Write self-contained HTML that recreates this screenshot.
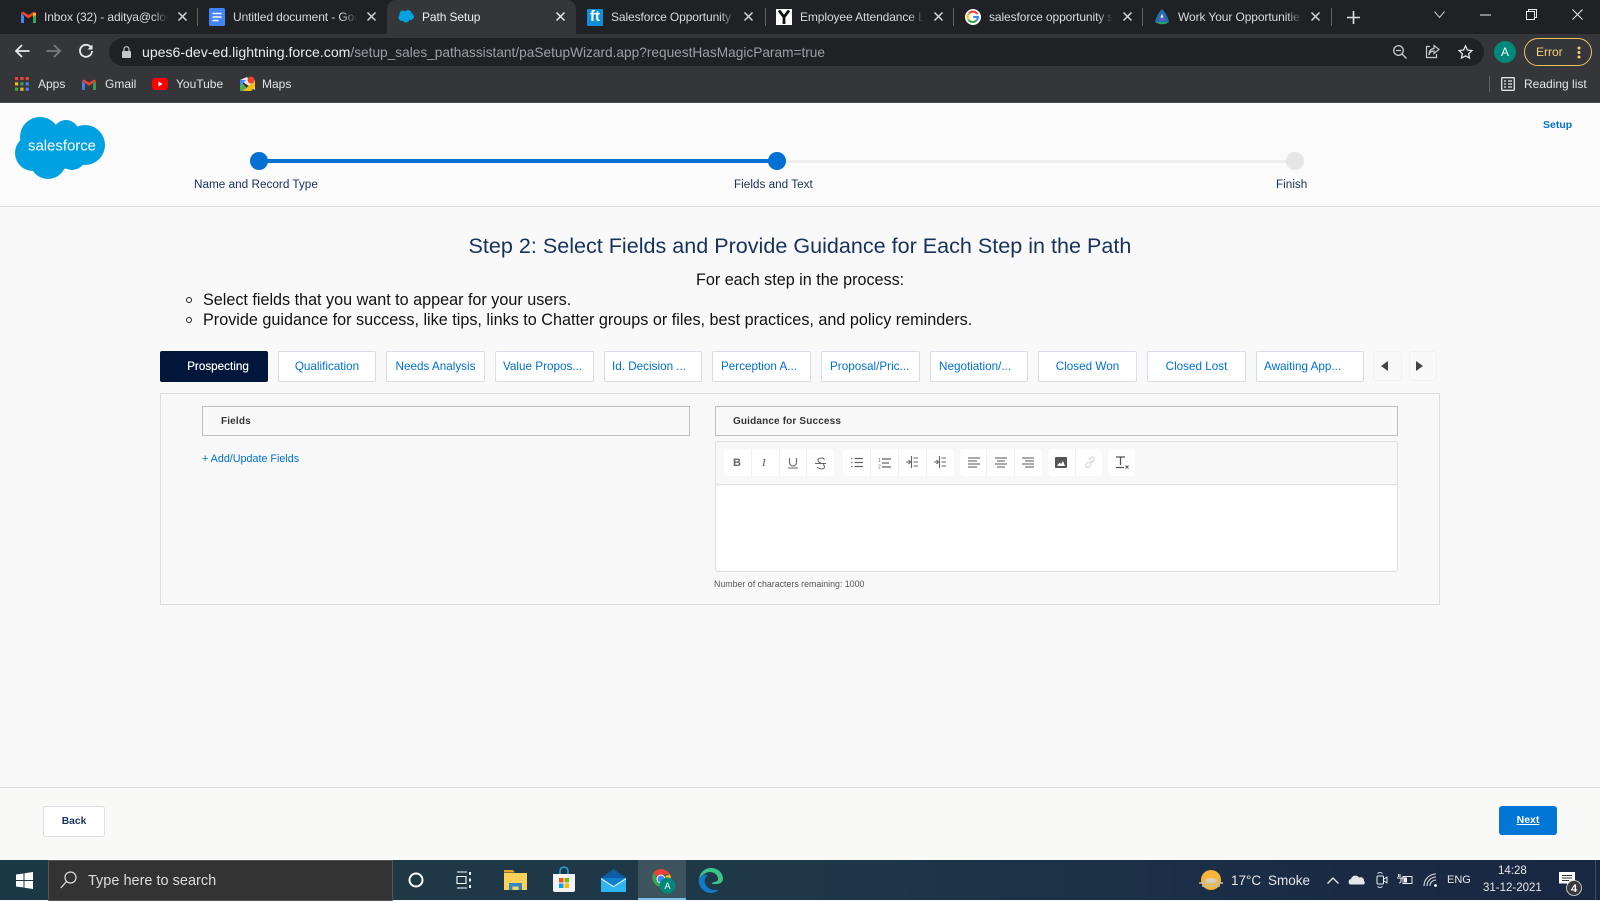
<!DOCTYPE html>
<html><head><meta charset="utf-8"><title>Path Setup</title>
<style>
html,body{margin:0;padding:0;width:1600px;height:900px;overflow:hidden;background:#f9f9f9;font-family:"Liberation Sans",Arial,sans-serif}
.a,.t{position:absolute}
.t{white-space:nowrap}
svg{position:absolute;overflow:visible}
.tab{color:#d6d8db;font-size:12px;letter-spacing:-.1px;line-height:16px;top:9px;overflow:hidden;-webkit-mask-image:linear-gradient(90deg,#000 88%,transparent)}
.sep{position:absolute;top:8px;width:1px;height:18px;background:#5f6368}
.bm{color:#e3e5e8;font-size:12px;line-height:16px;top:76px}
.st{position:absolute;top:351px;height:29px;box-sizing:content-box;background:#fff;border:1px solid #d8dde6;border-radius:2px;color:#0070d2;font-size:11.7px;line-height:29px;text-align:center;white-space:nowrap}
.st.l{text-align:left;padding-left:8px}
.lbl{color:#16325c;font-size:11.75px;line-height:16px;top:177px}
.box{position:absolute;top:406px;height:28px;border:1px solid #bfbfbf;background:#f9f9f9;color:#333;font-size:10px;font-weight:bold;line-height:29px;letter-spacing:.15px}
.grp{position:absolute;top:449px;height:27px;background:#fff;border-radius:4px}
.ts{position:absolute;top:0;width:1px;height:27px;background:#f1f1f1}
.tb{color:#e6e7e8}
</style></head><body>

<!-- browser chrome -->
<div class="a" style="left:0;top:0;width:1600px;height:34px;background:#202124"></div>
<div class="a" style="left:0;top:34px;width:1600px;height:68px;background:#35363a"></div>
<div class="a" style="left:0;top:102px;width:1600px;height:1px;background:#4a4b4e"></div>
<div class="a" style="left:387px;top:0;width:189px;height:34px;background:#35363a;border-radius:9px 9px 0 0"></div>

<!-- tab 1 -->
<svg style="left:21px;top:11px" width="15" height="12" viewBox="0 0 15 12"><path d="M0 2v10h3V5z" fill="#4285f4"/><path d="M12 5v7h3V2z" fill="#34a853"/><path d="M0 2l7.500 5.500L15 2 13 .5 7.500 4 2 .5z" fill="#ea4335"/><path d="M12 2l3 0v2l-3 2z" fill="#fbbc05"/></svg>
<div class="t tab" style="left:44px;width:124px">Inbox (32) - aditya@cloudwerx</div>
<svg style="left:178px;top:12px" width="9" height="9"><path d="M.5.5l8 8M8.500.5l-8 8" stroke="#d6d8db" stroke-width="1.500"/></svg>
<div class="sep" style="left:197px"></div>
<!-- tab 2 -->
<svg style="left:209px;top:8px" width="16" height="18"><rect width="16" height="18" rx="1.500" fill="#4285f4"/><path d="M3.500 5.500h9M3.500 9h9M3.500 12.500h6" stroke="#fff" stroke-width="1.500"/></svg>
<div class="t tab" style="left:233px;width:124px">Untitled document - Google Docs</div>
<svg style="left:367px;top:12px" width="9" height="9"><path d="M.5.5l8 8M8.500.5l-8 8" stroke="#d6d8db" stroke-width="1.500"/></svg>
<!-- tab 3 -->
<svg style="left:398px;top:10px" width="16" height="13" viewBox="0 0 16 13"><g fill="#00a1e0"><circle cx="5" cy="4" r="3.500"/><circle cx="10" cy="3.500" r="3.500"/><circle cx="12.500" cy="6.500" r="3.500"/><circle cx="4" cy="7.500" r="3.500"/><circle cx="8" cy="9" r="3.500"/></g></svg>
<div class="t tab" style="left:422px;color:#eceef0;width:124px">Path Setup</div>
<svg style="left:556px;top:12px" width="9" height="9"><path d="M.5.5l8 8M8.500.5l-8 8" stroke="#eceef0" stroke-width="1.500"/></svg>
<!-- tab 4 -->
<div class="a" style="left:587px;top:9px;width:16px;height:17px;background:#0f8fd6;border-radius:1px;color:#fff;font:bold 15px/16px 'Liberation Sans',sans-serif;text-align:center">ft</div>
<div class="t tab" style="left:611px;width:124px">Salesforce Opportunity Product</div>
<svg style="left:744px;top:12px" width="9" height="9"><path d="M.5.5l8 8M8.500.5l-8 8" stroke="#d6d8db" stroke-width="1.500"/></svg>
<div class="sep" style="left:765px"></div>
<!-- tab 5 -->
<div class="a" style="left:776px;top:9px;width:16px;height:16px;background:#fff"></div>
<svg style="left:776px;top:9px" width="16" height="16"><path d="M3 1.500L8 8l5-6.500M8 8v7" stroke="#111" stroke-width="2.800" fill="none"/></svg>
<div class="t tab" style="left:800px;width:124px">Employee Attendance List</div>
<svg style="left:934px;top:12px" width="9" height="9"><path d="M.5.5l8 8M8.500.5l-8 8" stroke="#d6d8db" stroke-width="1.500"/></svg>
<div class="sep" style="left:953px"></div>
<!-- tab 6 -->
<svg style="left:965px;top:9px" width="16" height="16" viewBox="0 0 16 16"><circle cx="8" cy="8" r="8" fill="#fff"/><path d="M12.300 5.200A5 5 0 0 0 4 4.500" stroke="#ea4335" stroke-width="2" fill="none"/><path d="M4 4.500a5 5 0 0 0-.3 6.500" stroke="#fbbc05" stroke-width="2" fill="none"/><path d="M3.700 11a5 5 0 0 0 7.600.5" stroke="#34a853" stroke-width="2" fill="none"/><path d="M11.300 11.500A5 5 0 0 0 13 8H8.200" stroke="#4285f4" stroke-width="2" fill="none"/></svg>
<div class="t tab" style="left:989px;width:124px">salesforce opportunity stages</div>
<svg style="left:1123px;top:12px" width="9" height="9"><path d="M.5.5l8 8M8.500.5l-8 8" stroke="#d6d8db" stroke-width="1.500"/></svg>
<div class="sep" style="left:1142px"></div>
<!-- tab 7 -->
<svg style="left:1154px;top:9px" width="16" height="16" viewBox="0 0 16 16"><path d="M8 0C5 3 2 8 1 13c2 2 12 2 14 0C14 8 11 3 8 0z" fill="#1f6fb5"/><path d="M8 3.500l-3.500 8.500h7z" fill="#6a5ab8"/><path d="M8 5l-1.500 3.500h3z" fill="#fff"/><path d="M1.500 13c3 3 10 3 13 0z" fill="#2e9e6b"/></svg>
<div class="t tab" style="left:1178px;width:124px">Work Your Opportunities</div>
<svg style="left:1311px;top:12px" width="9" height="9"><path d="M.5.5l8 8M8.500.5l-8 8" stroke="#d6d8db" stroke-width="1.500"/></svg>
<div class="sep" style="left:1331px"></div>
<svg style="left:1347px;top:11px" width="13" height="13"><path d="M6.500 0v13M0 6.500h13" stroke="#dfe1e5" stroke-width="1.600"/></svg>

<!-- window controls -->
<svg style="left:1434px;top:11px" width="11" height="7"><path d="M.5.500l5 6 5-6" stroke="#c8cacc" fill="none"/></svg>
<svg style="left:1480px;top:14px" width="11" height="2"><path d="M0 1h11" stroke="#e8eaed"/></svg>
<svg style="left:1526px;top:9px" width="11" height="11"><path d="M.5 2.500h8v8h-8zM2.500 2.500v-2h8v8h-2" stroke="#e8eaed" fill="none"/></svg>
<svg style="left:1572px;top:9px" width="11" height="11"><path d="M.5.5l10 10M10.500.5l-10 10" stroke="#e8eaed"/></svg>

<!-- toolbar -->
<svg style="left:15px;top:44px" width="15" height="14"><path d="M14.500 7H1.500M7 1L1 7l6 6" stroke="#e8eaed" stroke-width="1.800" fill="none"/></svg>
<svg style="left:46px;top:44px" width="15" height="14"><path d="M.5 7h13M8 1l6 6-6 6" stroke="#797b7e" stroke-width="1.800" fill="none"/></svg>
<svg style="left:79px;top:44px" width="14" height="14" viewBox="0 0 14 14"><path d="M12 3.500A6 6 0 1 0 13 7" stroke="#e8eaed" stroke-width="1.800" fill="none"/><path d="M13.500 .5v5h-5z" fill="#e8eaed"/></svg>
<div class="a" style="left:109px;top:38px;width:1375px;height:28px;background:#202124;border-radius:14px"></div>
<svg style="left:122px;top:46px" width="9" height="12"><path d="M2 5V3.200a2.500 2.500 0 0 1 5 0V5" stroke="#c5c7ca" fill="none" stroke-width="1.200"/><rect y="5" width="9" height="7" rx="1" fill="#c5c7ca"/></svg>
<div class="t" style="left:142px;top:44px;line-height:16px;color:#e8eaed"><span style="font-size:14.1px">upes6-dev-ed.lightning.force.com</span><span style="color:#9aa0a6;font-size:13.68px">/setup_sales_pathassistant/paSetupWizard.app?requestHasMagicParam=true</span></div>
<svg style="left:1393px;top:45px" width="14" height="14"><circle cx="5.500" cy="5.500" r="4.800" stroke="#c8cacc" stroke-width="1.300" fill="none"/><path d="M9 9l4.500 4.500M3 5.500h5" stroke="#c8cacc" stroke-width="1.300"/></svg>
<svg style="left:1425px;top:44px" width="15" height="15"><path d="M9 1.500l5 4-5 4V7C6 7 4.500 8.500 4 11c0-3.500 1.500-6 5-6.500zM5 2.500H1.500v11h10V10" stroke="#c8cacc" stroke-width="1.200" fill="none"/></svg>
<svg style="left:1458px;top:45px" width="15" height="14" viewBox="0 0 16 15"><path d="M8 1l2.100 4.400 4.800.6-3.500 3.300.9 4.700L8 11.700 3.700 14l.9-4.700L1.100 6l4.800-.6z" stroke="#dfe1e5" stroke-width="1.400" fill="none"/></svg>
<div class="a" style="left:1494px;top:41px;width:22px;height:22px;border-radius:50%;background:#00897b;color:#fff;font-size:12px;line-height:22px;text-align:center">A</div>
<div class="a" style="left:1524px;top:38px;width:66px;height:26px;border:1px solid #f0c060;border-radius:14px"></div>
<div class="t" style="left:1536px;top:44px;color:#f3d07a;font-size:12px;line-height:16px">Error</div>
<svg style="left:1577px;top:46px" width="4" height="13"><g fill="#f3d07a"><circle cx="2" cy="2" r="1.500"/><circle cx="2" cy="6.500" r="1.500"/><circle cx="2" cy="11" r="1.500"/></g></svg>

<!-- bookmarks -->
<svg style="left:15px;top:77px" width="14" height="14"><g><rect width="3.200" height="3.200" fill="#ea4335"/><rect x="5.300" width="3.200" height="3.200" fill="#ea4335"/><rect x="10.600" width="3.200" height="3.200" fill="#ea4335"/><rect y="5.300" width="3.200" height="3.200" fill="#fbbc05"/><rect x="5.300" y="5.300" width="3.200" height="3.200" fill="#34a853"/><rect x="10.600" y="5.300" width="3.200" height="3.200" fill="#4285f4"/><rect y="10.600" width="3.200" height="3.200" fill="#34a853"/><rect x="5.300" y="10.600" width="3.200" height="3.200" fill="#fbbc05"/><rect x="10.600" y="10.600" width="3.200" height="3.200" fill="#4285f4"/></g></svg>
<div class="t bm" style="left:38px">Apps</div>
<svg style="left:82px;top:79px" width="14" height="11" viewBox="0 0 15 12"><path d="M0 2v10h3V5z" fill="#4285f4"/><path d="M12 5v7h3V2z" fill="#34a853"/><path d="M0 2l7.500 5.500L15 2 13 .5 7.500 4 2 .5z" fill="#ea4335"/></svg>
<div class="t bm" style="left:105px">Gmail</div>
<svg style="left:152px;top:78px" width="16" height="12"><rect width="16" height="12" rx="3" fill="#f00"/><path d="M6.500 3.500v5l4-2.500z" fill="#fff"/></svg>
<div class="t bm" style="left:176px">YouTube</div>
<svg style="left:240px;top:76px" width="15" height="15"><path d="M0 4l9 11H1a1 1 0 0 1-1-1z" fill="#4caf50"/><path d="M0 4l7-3 8 10v3z" fill="#e8eaed"/><path d="M3 15L15 4v7l-4 4z" fill="#fbbc05"/><circle cx="11" cy="4" r="3.500" fill="#ea4335"/><path d="M0 4h6L0 10z" fill="#4285f4"/></svg>
<div class="t bm" style="left:262px">Maps</div>
<div class="a" style="left:1489px;top:76px;width:1px;height:16px;background:#5f6368"></div>
<svg style="left:1501px;top:77px" width="14" height="14"><rect x=".7" y=".7" width="12.600" height="12.600" rx="1" stroke="#e3e5e8" stroke-width="1.300" fill="none"/><path d="M3 4h2M7 4h4M3 7h2M7 7h4M3 10h2M7 10h4" stroke="#e3e5e8" stroke-width="1.200"/></svg>
<div class="t bm" style="left:1524px">Reading list</div>

<!-- page header -->
<div class="a" style="left:0;top:103px;width:1600px;height:757px;background:#f9f9f9"></div>
<div class="a" style="left:0;top:103px;width:1600px;height:103px;background:#fbfbfb"></div>
<div class="a" style="left:0;top:206px;width:1600px;height:1px;background:#dddddd"></div>
<svg style="left:0;top:103px" width="120" height="90"><g fill="#00a1e0"><circle cx="40" cy="34" r="20"/><circle cx="66" cy="30" r="13"/><circle cx="85" cy="42" r="20"/><circle cx="33" cy="50" r="18"/><circle cx="48" cy="58" r="18"/><circle cx="72" cy="53" r="14"/><circle cx="58" cy="45" r="22"/></g><text x="28" y="47.500" fill="#fff" font-family="Liberation Sans, sans-serif" font-size="15" textLength="68">salesforce</text></svg>
<div class="t" style="left:1543px;top:118px;color:#0070d2;font-size:10.5px;font-weight:bold;line-height:14px">Setup</div>

<!-- stepper -->
<div class="a" style="left:259px;top:159px;width:518px;height:4px;background:#0070d2"></div>
<div class="a" style="left:777px;top:160px;width:518px;height:3px;background:#eeeeee"></div>
<div class="a" style="left:250px;top:152px;width:18px;height:18px;border-radius:50%;background:#0070d2"></div>
<div class="a" style="left:768px;top:152px;width:18px;height:18px;border-radius:50%;background:#0070d2"></div>
<div class="a" style="left:1286px;top:152px;width:18px;height:18px;border-radius:50%;background:#e6e6e6"></div>
<div class="t lbl" style="left:194px">Name and Record Type</div>
<div class="t lbl" style="left:734px">Fields and Text</div>
<div class="t lbl" style="left:1276px">Finish</div>

<!-- heading -->
<div class="t" style="left:468.5px;top:233px;color:#16325c;font-size:21.57px;line-height:26px">Step 2: Select Fields and Provide Guidance for Each Step in the Path</div>
<div class="t" style="left:696px;top:271px;color:#111;font-size:16.15px;line-height:19px">For each step in the process:</div>
<div class="a" style="left:186px;top:297px;width:4px;height:4px;border:1px solid #222;border-radius:50%"></div>
<div class="a" style="left:186px;top:317px;width:4px;height:4px;border:1px solid #222;border-radius:50%"></div>
<div class="t" style="left:203px;top:291px;color:#111;font-size:16.17px;line-height:19px">Select fields that you want to appear for your users.</div>
<div class="t" style="left:203px;top:311px;color:#111;font-size:16.2px;line-height:19px">Provide guidance for success, like tips, links to Chatter groups or files, best practices, and policy reminders.</div>

<!-- stage tabs -->
<div class="st" style="left:160px;width:108px;height:31px;line-height:31px;border:0;background:#00163a;color:#fff;text-shadow:0 0 .4px #fff;box-sizing:border-box;padding-left:8px">Prospecting</div>
<div class="st" style="left:278px;width:96px">Qualification</div>
<div class="st" style="left:386px;width:97px">Needs Analysis</div>
<div class="st l" style="left:495px;width:90px;padding-left:7px">Value Propos...</div>
<div class="st l" style="left:604px;width:89px;padding-left:7px">Id. Decision ...</div>
<div class="st l" style="left:712px;width:89px">Perception A...</div>
<div class="st l" style="left:821px;width:89px">Proposal/Pric...</div>
<div class="st l" style="left:930px;width:88px">Negotiation/...</div>
<div class="st" style="left:1038px;width:97px">Closed Won</div>
<div class="st" style="left:1147px;width:97px">Closed Lost</div>
<div class="st l" style="left:1256px;width:99px;padding-left:7px">Awaiting App...</div>
<div class="a" style="left:1373px;top:351px;width:27px;height:28px;border:1px solid #f2f2f2;border-radius:3px"></div>
<div class="a" style="left:1409px;top:351px;width:26px;height:28px;border:1px solid #f2f2f2;border-radius:3px"></div>
<svg style="left:1381px;top:361px" width="7" height="10"><path d="M7 0v10L0 5z" fill="#444"/></svg>
<svg style="left:1416px;top:361px" width="7" height="10"><path d="M0 0v10l7-5z" fill="#444"/></svg>

<!-- panel -->
<div class="a" style="left:160px;top:393px;width:1278px;height:210px;border:1px solid #dcdcdc;background:#f8f8f8"></div>
<div class="box" style="left:202px;width:468px;padding-left:18px">Fields</div>
<div class="box" style="left:715px;width:664px;padding-left:17px">Guidance for Success</div>
<div class="t" style="left:202px;top:452px;color:#0070d2;font-size:10.75px;line-height:14px">+ Add/Update Fields</div>

<!-- editor -->
<div class="a" style="left:715px;top:441px;width:681px;height:129px;border:1px solid #e0e0e0;border-radius:3px;background:#f8f8f8"></div>
<div class="a" style="left:716px;top:484px;width:681px;height:1px;background:#e0e0e0"></div>
<div class="a" style="left:716px;top:485px;width:681px;height:85px;background:#fff"></div>
<div class="grp" style="left:724px;width:110px"><i class="ts" style="left:27px"></i><i class="ts" style="left:55px"></i><i class="ts" style="left:82px"></i></div>
<div class="grp" style="left:843px;width:111px"><i class="ts" style="left:27px"></i><i class="ts" style="left:55px"></i><i class="ts" style="left:83px"></i></div>
<div class="grp" style="left:960px;width:82px"><i class="ts" style="left:26px"></i><i class="ts" style="left:54px"></i></div>
<div class="grp" style="left:1048px;width:54px"><i class="ts" style="left:27px"></i></div>
<div class="grp" style="left:1108px;width:27px"></div>

<div class="t" style="left:733px;top:457px;font:bold 11px/13px 'Liberation Sans',sans-serif;color:#666">B</div>
<div class="t" style="left:762px;top:457px;font:italic 11px/13px 'Liberation Serif',serif;color:#555">I</div>
<svg style="left:788px;top:458px" width="10" height="11"><path d="M1.500 0v4.500a3.500 3.500 0 0 0 7 0V0M0 10h10" stroke="#666" stroke-width="1.100" fill="none"/></svg>
<svg style="left:815px;top:457px" width="11" height="13"><path d="M9.500 2.500C8 .5 3 .5 3 3c0 1.500 1 2.500 3 3M2 10c2 2.500 7.500 2.500 7.500 0 0-1-.5-2-1.500-2.500M0 6.500h11" stroke="#666" stroke-width="1" fill="none"/></svg>

<svg style="left:851px;top:457px" width="12" height="11"><path d="M3.500 1.500h8.500M3.500 5.500h8.500M3.500 9.500h8.500" stroke="#666" stroke-width="1.200"/><path d="M0 1.500h2M0 5.500h2M0 9.500h2" stroke="#666" stroke-width="1.200" stroke-dasharray="1 .6"/></svg>
<svg style="left:878px;top:457px" width="13" height="12"><path d="M4 2h9M4 6h7M4 10h9" stroke="#666" stroke-width="1.200"/><text x="0" y="5" font-size="5" fill="#666" font-family="Liberation Sans, sans-serif">1</text><text x="0" y="11.500" font-size="5" fill="#666" font-family="Liberation Sans, sans-serif">2</text></svg>
<svg style="left:906px;top:456px" width="12" height="12"><path d="M0 6h4M2.500 4l2 2-2 2M5.500 0v12M7.500 2h4.500M7.500 6h4.500M7.500 10h4.500" stroke="#666" stroke-width="1.100" fill="none"/></svg>
<svg style="left:934px;top:456px" width="12" height="12"><path d="M0 6h4M2.500 4l2 2-2 2M5.500 0v12M7.500 2h4.500M7.500 6h4.500M7.500 10h4.500" stroke="#666" stroke-width="1.100" fill="none"/></svg>

<svg style="left:968px;top:457px" width="12" height="11"><path d="M0 1h12M0 4h9M0 7h12M0 10h9" stroke="#777" stroke-width="1.300"/></svg>
<svg style="left:995px;top:457px" width="12" height="11"><path d="M0 1h12M2 4h8M0 7h12M2 10h8" stroke="#777" stroke-width="1.300"/></svg>
<svg style="left:1022px;top:457px" width="12" height="11"><path d="M0 1h12M3 4h9M0 7h12M3 10h9" stroke="#777" stroke-width="1.300"/></svg>

<svg style="left:1055px;top:457px" width="12" height="11"><rect width="12" height="11" rx="1" fill="#555"/><path d="M2 9l2.500-3.500L6 7l2-3 2 5z" fill="#fff"/></svg>
<svg style="left:1084px;top:456px" width="12" height="13"><path d="M5 8L8 4.500M4.500 5.500L2 8.500a2 2 0 0 0 3 2.500l2-2.500M7.500 7l2.500-3a2 2 0 0 0-3-2.500L5 4" stroke="#d4d4d4" stroke-width="1.100" fill="none"/></svg>
<svg style="left:1116px;top:456px" width="13" height="13"><path d="M0 1h9M4.500 1v8M0 11.500h8" stroke="#555" stroke-width="1.300" fill="none"/><path d="M9.500 9.500l3 3M12.500 9.500l-3 3" stroke="#555" stroke-width="1"/></svg>

<div class="t" style="left:714px;top:578px;color:#555;font-size:8.82px;line-height:13px">Number of characters remaining: 1000</div>

<!-- footer -->
<div class="a" style="left:0;top:787px;width:1600px;height:1px;background:#dcdcdc"></div>
<div class="a" style="left:0;top:788px;width:1600px;height:72px;background:#f9f9f7"></div>
<div class="a" style="left:43px;top:806px;width:60px;height:29px;background:#fff;border:1px solid #dcdde0;border-radius:3px;color:#16325c;font-size:10.3px;font-weight:bold;line-height:30px;text-align:center">Back</div>
<div class="a" style="left:1499px;top:806px;width:58px;height:29px;background:#0076d6;border-radius:3px;color:#fff;font-size:10.5px;font-weight:bold;line-height:29px;text-align:center;text-decoration:underline">Next</div>

<!-- taskbar -->
<div class="a" style="left:0;top:860px;width:1600px;height:40px;background:linear-gradient(90deg,#1d3845 0%,#1e3848 50%,#1a2a45 85%,#182842 100%)"></div>
<svg style="left:16px;top:872px" width="17" height="17"><path d="M0 2.500L7.500 1.500v6.500H0zM8.500 1.300L17 0v8H8.500zM0 9h7.500v6.500L0 14.500zM8.500 9H17v8l-8.500-1.300z" fill="#fff"/></svg>
<div class="a" style="left:48px;top:860px;width:343px;height:39px;background:#333;border:1px solid #555"></div>
<svg style="left:60px;top:871px" width="17" height="18"><circle cx="10.500" cy="6.500" r="5.500" stroke="#ddd" stroke-width="1.200" fill="none"/><path d="M6.500 10.500L.8 17" stroke="#ddd" stroke-width="1.300"/></svg>
<div class="t" style="left:88px;top:872px;color:#dcdcdc;font-size:14.5px;line-height:18px">Type here to search</div>
<svg style="left:408px;top:872px" width="16" height="16"><circle cx="8" cy="8" r="6.500" stroke="#fff" stroke-width="2" fill="none"/></svg>
<svg style="left:456px;top:871px" width="16" height="18"><path d="M1 1h10M1 17h10M1 5.500h9v7H1z" stroke="#fff" stroke-width="1.100" fill="none"/><path d="M14 1v3M14 7.500v3M14 14v3" stroke="#fff" stroke-width="2"/></svg>
<svg style="left:504px;top:870px" width="23" height="20"><path d="M0 0h9l2 2.500H0z" fill="#e9a820"/><rect y="3" width="23" height="17" fill="#fcd158"/><path d="M5 20v-7h13v7h-3.500v-3.500h-6V20z" fill="#2f87c8"/></svg>
<svg style="left:552px;top:868px" width="24" height="24"><path d="M8 6V3a4 4 0 0 1 8 0v3" stroke="#2a9fe0" stroke-width="1.600" fill="none"/><path d="M1 6h22v16a2 2 0 0 1-2 2H3a2 2 0 0 1-2-2z" fill="#f3f3f3"/><rect x="7" y="10" width="4.500" height="4.500" fill="#f25022"/><rect x="12.500" y="10" width="4.500" height="4.500" fill="#7fba00"/><rect x="7" y="15.500" width="4.500" height="4.500" fill="#00a4ef"/><rect x="12.500" y="15.500" width="4.500" height="4.500" fill="#ffb900"/></svg>
<svg style="left:601px;top:869px" width="25" height="23"><path d="M12.500 0L25 9H0z" fill="#0d5ea8"/><rect y="9" width="25" height="14" fill="#2cb5f0"/><path d="M0 9h25l-12.500 8z" fill="#0f7fc9"/><path d="M0 9l12.500 8L25 9v1.300l-12.500 8L0 10.300z" fill="#e8f6fd"/></svg>
<div class="a" style="left:638px;top:860px;width:48px;height:40px;background:#3d535e"></div>
<div class="a" style="left:638px;top:898px;width:48px;height:2px;background:#7cc0ee"></div>
<svg style="left:650px;top:868px" width="26" height="26" viewBox="0 0 26 26"><path d="M11 1a10 10 0 0 1 9 5.500h-9a4.500 4.500 0 0 0-4.300 3L3.500 4.500A10 10 0 0 1 11 1z" fill="#ea4335"/><path d="M3.500 4.500l4.500 8 3.800 6.700A10 10 0 0 1 3.500 4.500z" fill="#34a853"/><path d="M20 6.500A10 10 0 0 1 11.800 21l4.400-7.800A4.500 4.500 0 0 0 15 8z" fill="#fbbc05"/><circle cx="11" cy="11" r="4" fill="#4285f4" stroke="#fff" stroke-width="1"/><circle cx="17.500" cy="17.500" r="8" fill="#00897b"/><text x="17.500" y="21" text-anchor="middle" font-size="9" fill="#fff" font-family="Liberation Sans, sans-serif">A</text></svg>
<svg style="left:698px;top:868px" width="25" height="25" viewBox="0 0 25 25"><path d="M1 11C2 4 7 0 13 0c7 0 12 5 12 11 0 3-3 5-6 5h-5c0-3 6-1 6-5 0-4-4-7-8-7S4 7 1 11z" fill="#39c48a"/><path d="M1 11C3 7 7 6 10 7c-3 2-4 5-3 8 1 4 5 7 10 7 2 0 3 0 4-1-2 3-5 4-8 4C6 25 0 19 1 11z" fill="#1279c8"/></svg>

<!-- tray -->
<svg style="left:1199px;top:870px" width="24" height="22"><circle cx="12" cy="10" r="10" fill="#f5b43a"/><path d="M0 13h24M3 16h18" stroke="#c9c0a8" stroke-width="1.600"/><ellipse cx="12" cy="10.500" rx="6" ry="2.500" fill="#d9d0bb"/></svg>
<div class="t tb" style="left:1231px;top:872px;font-size:13.5px;line-height:18px">17°C</div>
<div class="t tb" style="left:1268px;top:872px;font-size:13.5px;line-height:18px">Smoke</div>
<svg style="left:1327px;top:877px" width="12" height="7"><path d="M.5 6.500L6 1l5.500 5.500" stroke="#eee" stroke-width="1.300" fill="none"/></svg>
<svg style="left:1349px;top:875px" width="16" height="10"><path d="M1 9.500a3 3 0 0 1 1-5.500 4.500 4.500 0 0 1 8-1.500A3.500 3.500 0 0 1 15 6a2 2 0 0 1-.5 3.500z" fill="#e4e6e8"/></svg>
<svg style="left:1376px;top:871px" width="11" height="18"><rect x="1" y="5" width="6.500" height="8" rx="1" stroke="#eee" fill="none"/><path d="M8 8l3-2v6l-3-2M1.500 2.500a4 4 0 0 1 5 0M1.500 15.500a4 4 0 0 0 5 0" stroke="#eee" fill="none"/></svg>
<svg style="left:1397px;top:873px" width="16" height="13"><path d="M0 5h7M3 1v3M1.500 1v3M4 5v3a2 2 0 0 1-2 2" stroke="#eee" fill="none" stroke-width="1"/><rect x="6" y="3.500" width="9" height="7" stroke="#eee" fill="none"/><path d="M7 4.500h3v5H7z" fill="#eee"/></svg>
<svg style="left:1423px;top:873px" width="15" height="14"><path d="M1 13a12 12 0 0 1 12-12M4 13a9 9 0 0 1 9-9M7 13a6 6 0 0 1 6-6" stroke="#ddd" stroke-width="1.100" fill="none"/><circle cx="12.500" cy="12.500" r="1.400" fill="#fff"/></svg>
<div class="t tb" style="left:1447px;top:872px;font-size:11px;line-height:16px">ENG</div>
<div class="t tb" style="left:1498px;top:864px;font-size:11.5px;line-height:15px">14:28</div>
<div class="t tb" style="left:1483px;top:881px;font-size:11.5px;line-height:15px">31-12-2021</div>
<svg style="left:1559px;top:872px" width="24" height="24"><path d="M0 0h16v11.500h-5L8 15v-3.500H0z" fill="#fff"/><path d="M3 3.500h10M3 6h10M3 8.500h7" stroke="#333"/><circle cx="15" cy="16" r="7.500" fill="#3a3a3a" stroke="#ddd" stroke-width=".8"/><text x="15" y="20" text-anchor="middle" font-size="11" font-weight="bold" fill="#fff" font-family="Liberation Sans, sans-serif">4</text></svg>
<div class="a" style="left:1595px;top:860px;width:1px;height:40px;background:#3f4b5e"></div>
</body></html>
